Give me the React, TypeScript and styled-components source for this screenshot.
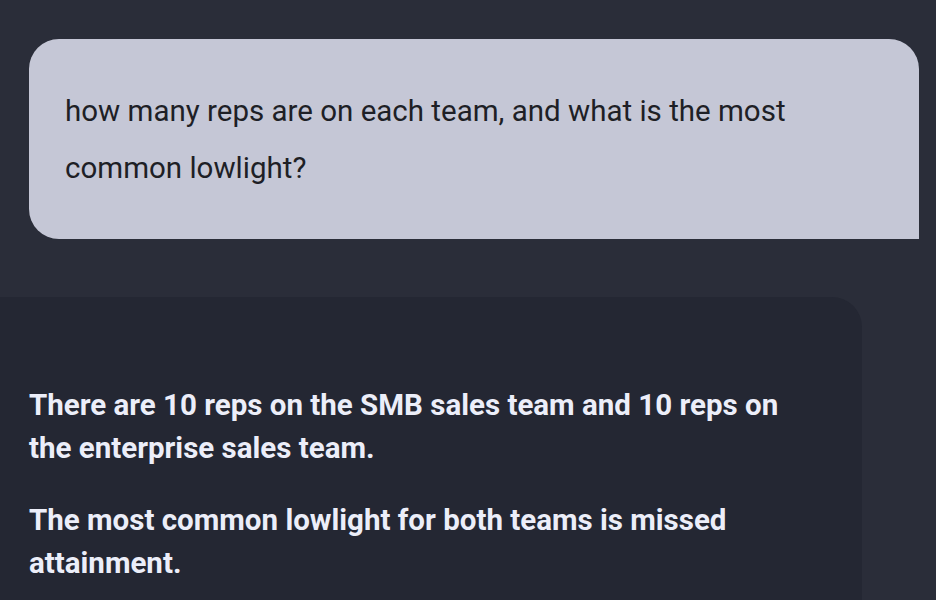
import React from "react";
import styled, { createGlobalStyle } from "styled-components";

const GlobalStyle = createGlobalStyle`
  html, body {
    margin: 0;
    padding: 0;
    background: #2a2d39;
    overflow: hidden;
  }
  body {
    font-family: Roboto, "Liberation Sans", Arial, sans-serif;
  }
`;

const Thread = styled.div`
  display: flex;
  flex-direction: column;
  gap: 58px;
  padding-top: 39px;
  width: 936px;
  height: 600px;
  box-sizing: border-box;
`;

const UserBubble = styled.div`
  flex-shrink: 0;
  margin-left: 29px;
  width: 890px;
  height: 200px;
  box-sizing: border-box;
  padding: 44px 36px 0 36px;
  background: #c5c7d6;
  border-radius: 30px 30px 0 30px;
  color: #1e1f26;
  font-size: 29.5px;
  line-height: 57px;
`;

const AssistantBubble = styled.div`
  width: 862px;
  flex: 1 0 auto;
  box-sizing: border-box;
  padding: 87px 63px 0 29px;
  background: #242733;
  border-radius: 0 30px 0 0;
`;

const Paragraph = styled.p`
  margin: 0 0 29px 0;
  color: #eceef9;
  font-size: 29.5px;
  font-weight: 700;
  line-height: 43px;
`;

export default function App() {
  return (
    <>
      <GlobalStyle />
      <Thread>
        <UserBubble>
          how many reps are on each team, and what is the most common lowlight?
        </UserBubble>
        <AssistantBubble>
          <Paragraph>
            There are 10 reps on the SMB sales team and 10 reps on the enterprise sales team.
          </Paragraph>
          <Paragraph>
            The most common lowlight for both teams is missed attainment.
          </Paragraph>
        </AssistantBubble>
      </Thread>
    </>
  );
}
